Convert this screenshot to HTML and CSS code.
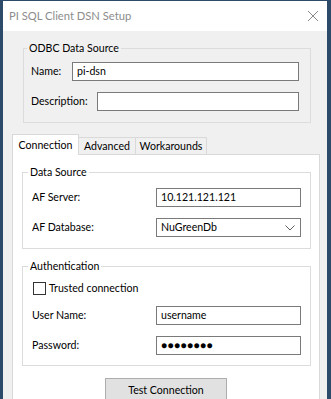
FILE: index.html
```html
<!DOCTYPE html>
<html lang="en">
<head>
    <meta charset="UTF-8">
    <title>PI SQL Client DSN Setup</title>
    <link rel="stylesheet" href="styles.css">
</head>
<body>
    <div class="window">
        <div class="titlebar">
            <span class="title">PI SQL Client DSN Setup</span>
            <svg class="close" width="12" height="12" viewBox="0 0 12 12">
                <path d="M1 1 L11 11 M11 1 L1 11" stroke="#8a8a8a" stroke-width="1" fill="none"/>
            </svg>
        </div>

        <div class="dialog">
            <fieldset class="group group-odbc">
                <legend>ODBC Data Source</legend>
                <div class="field-row">
                    <span class="label label-name">Name:</span>
                    <div class="textbox">pi-dsn</div>
                </div>
                <div class="field-row">
                    <span class="label label-desc">Description:</span>
                    <div class="textbox"></div>
                </div>
            </fieldset>

            <div class="tabs">
                <div class="tab tab-active">Connection</div>
                <div class="tab tab-advanced">Advanced</div>
                <div class="tab tab-workarounds">Workarounds</div>
            </div>

            <div class="tab-panel">
                <fieldset class="group group-source">
                    <legend>Data Source</legend>
                    <div class="form-grid">
                        <span class="label">AF Server:</span>
                        <div class="textbox">10.121.121.121</div>
                        <span class="label">AF Database:</span>
                        <div class="textbox combo">
                            <span>NuGreenDb</span>
                            <svg width="10" height="6" viewBox="0 0 10 6">
                                <path d="M0.5 0.5 L5 5 L9.5 0.5" stroke="#606060" stroke-width="1" fill="none"/>
                            </svg>
                        </div>
                    </div>
                </fieldset>

                <fieldset class="group group-auth">
                    <legend>Authentication</legend>
                    <div class="form-grid auth-grid">
                        <div class="check-row">
                            <span class="checkbox"></span>
                            <span>Trusted connection</span>
                        </div>
                        <span class="label">User Name:</span>
                        <div class="textbox">username</div>
                        <span class="label">Password:</span>
                        <div class="textbox password">&#9679;&#9679;&#9679;&#9679;&#9679;&#9679;&#9679;&#9679;</div>
                    </div>
                </fieldset>

                <div class="button-row">
                    <button class="button">Test Connection</button>
                </div>
            </div>
        </div>
    </div>
</body>
</html>
```

FILE: styles.css
```css
html, body {
    margin: 0;
    padding: 0;
    height: 100%;
    overflow: hidden;
}
body {
    font-family: Lato, "Open Sans", sans-serif;
    font-size: 10.6px;
    color: #000;
    background: #2c4a69;
}
.window {
    box-sizing: border-box;
    height: 399px;
    width: 331px;
    border-top: 1px solid #2c4a69;
    border-left: 3px solid #2c4a69;
    border-right: 4px solid #2c4a69;
    display: flex;
    flex-direction: column;
    background: #f0f0f0;
}
.titlebar {
    height: 30px;
    flex: none;
    background: #fff;
    display: flex;
    align-items: center;
    justify-content: space-between;
    padding: 0 6px 0 6px;
}
.title {
    font-size: 11.2px;
    color: #8c8c8c;
    margin-top: -1px;
}
.close {
    margin-right: 2px;
    margin-top: -1px;
}
.dialog {
    flex: 1;
    display: flex;
    flex-direction: column;
    padding-top: 9px;
    min-height: 0;
}

/* group boxes */
.group {
    border: 1px solid #dcdcdc;
    margin: 0;
    padding: 0;
    min-width: 0;
}
.group legend {
    padding: 0 2px;
    margin-left: -4px;
    line-height: 16px;
    height: 16px;
}
.group-odbc {
    margin: 0 16px 0 20px;
    padding: 6px 11px 11px 7px;
}
.field-row {
    display: flex;
    align-items: center;
    height: 19px;
}
.field-row + .field-row {
    margin-top: 11px;
}
.label {
    line-height: 19px;
}
.label-name {
    width: 41px;
    flex: none;
}
.label-desc {
    width: 66px;
    flex: none;
}
.textbox {
    box-sizing: border-box;
    flex: 1;
    height: 19px;
    border: 1px solid #7a7a7a;
    background: #fff;
    padding: 0 4px;
    line-height: 17px;
    white-space: nowrap;
}

/* tabs */
.tabs {
    display: flex;
    align-items: flex-end;
    height: 20px;
    margin: 11px 0 0 9px;
    flex: none;
}
.tab {
    box-sizing: border-box;
    height: 17px;
    border: 1px solid #d9d9d9;
    border-bottom: none;
    background: #f0f0f0;
    text-align: center;
    line-height: 17px;
    margin-left: -1px;
}
.tab-active {
    position: relative;
    z-index: 1;
    height: 21px;
    width: 67px;
    margin: 0 0 -1px 0;
    background: #fff;
    line-height: 20px;
}
.tab-advanced {
    width: 58px;
}
.tab-workarounds {
    width: 72px;
}
.tab-panel {
    flex: 1;
    margin: 0 7px 0 9px;
    border: 1px solid #d9d9d9;
    border-bottom: none;
    background: #fff;
}
.group-source {
    margin: 9px 8px 0 9px;
    padding: 8px 9px 11px 9px;
}
.group-auth {
    margin: 9px 8px 0 9px;
    padding: 7px 9px 10px 9px;
}
.form-grid {
    display: grid;
    grid-template-columns: 1fr 145px;
    grid-auto-rows: 19px;
    row-gap: 11px;
    align-items: center;
}
.auth-grid {
    grid-template-rows: 14px 19px 19px;
}
.combo {
    display: flex;
    align-items: center;
    justify-content: space-between;
    padding-right: 5px;
}
.password {
    font-size: 10px;
    letter-spacing: 0.5px;
}
.check-row {
    grid-column: 1 / 3;
    display: flex;
    align-items: center;
    height: 14px;
}
.checkbox {
    box-sizing: border-box;
    width: 13px;
    height: 13px;
    border: 1px solid #333;
    background: #fff;
    margin: 0 3px 0 1px;
}
.button-row {
    display: flex;
    justify-content: center;
    margin-top: 12px;
}
.button {
    width: 122px;
    height: 23px;
    background: #e1e1e1;
    border: 1px solid #adadad;
    font-family: inherit;
    font-size: inherit;
    color: #000;
    padding: 0;
}
```
